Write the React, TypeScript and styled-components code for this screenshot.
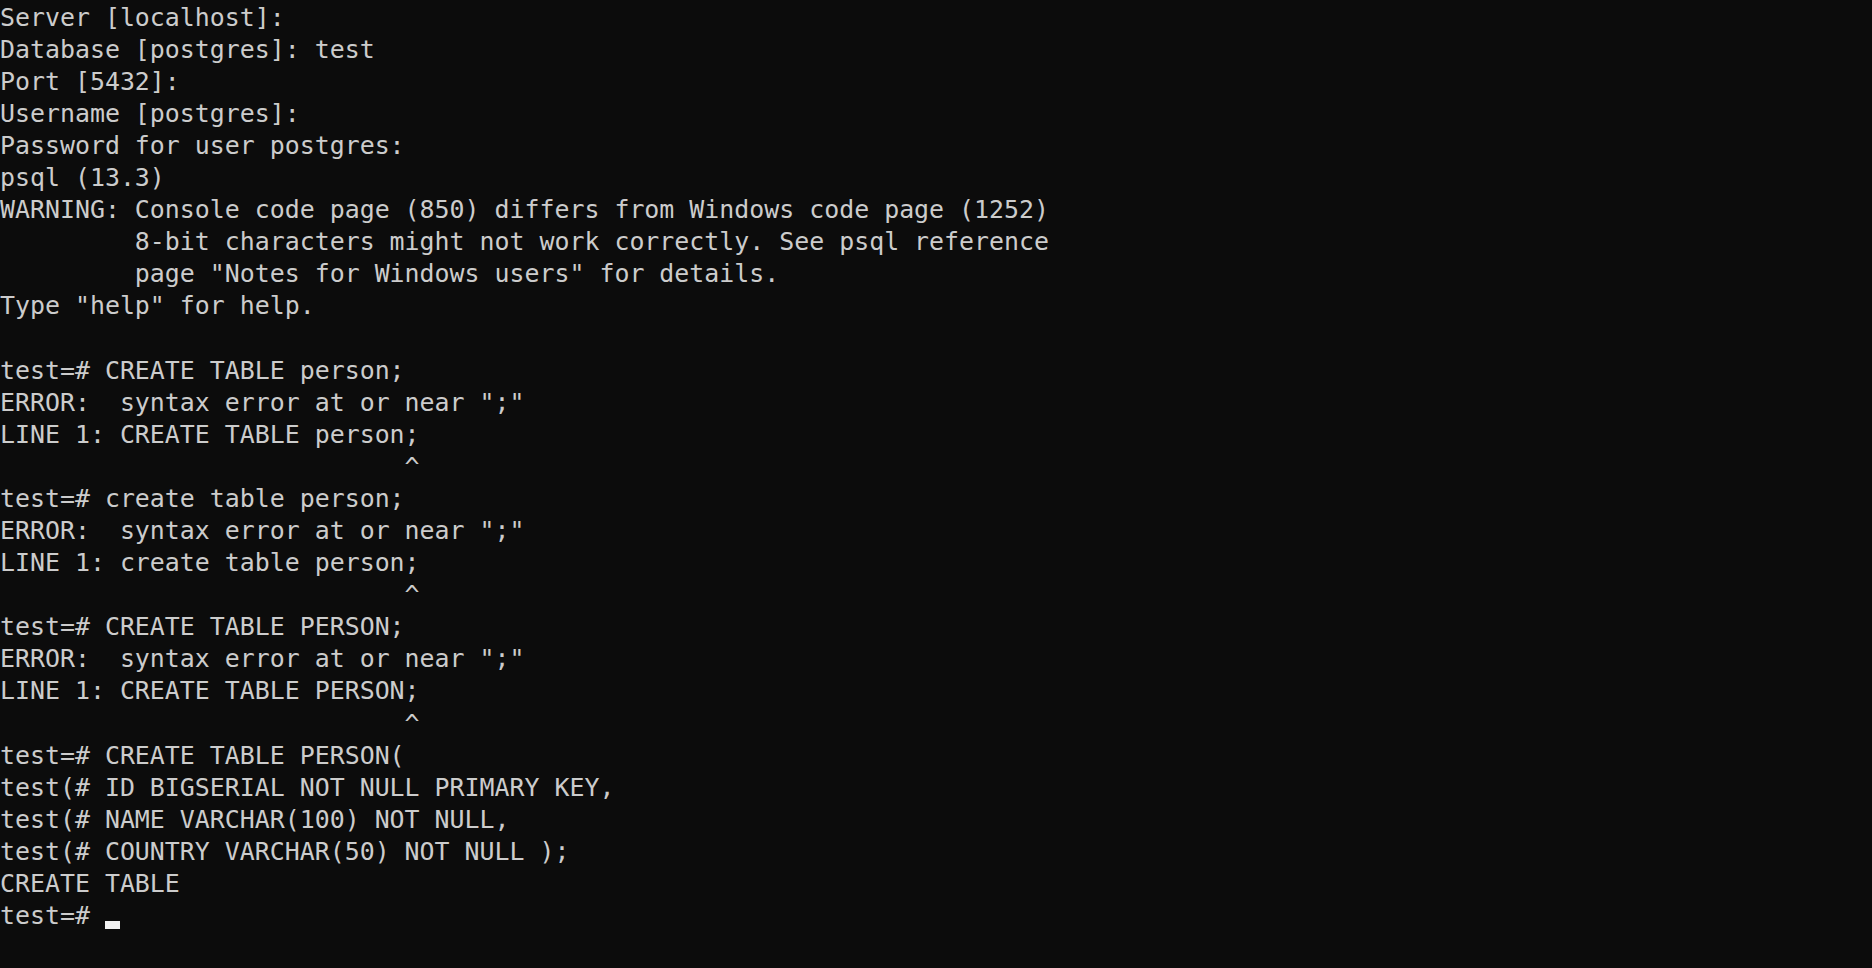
import React from "react";
import styled, { createGlobalStyle } from "styled-components";

const Global = createGlobalStyle`
  html, body { margin: 0; padding: 0; background: #0c0c0c; }
  body { width: 1872px; height: 968px; overflow: hidden; }
`;

const Console = styled.div`
  width: 1872px;
  height: 968px;
  box-sizing: border-box;
  background: #0c0c0c;
  color: #cccccc;
  font-family: "DejaVu Sans Mono", "Liberation Mono", monospace;
  font-size: 24.9px;
  line-height: 32.1px;
  padding: 1.5px 0 0;
  display: flex;
  flex-direction: column;
`;

const Line = styled.div`
  white-space: pre;
  height: 32.1px;
  display: flex;
  align-items: center;
`;

const Cursor = styled.span`
  display: inline-block;
  width: 15px;
  height: 8px;
  background: #f2f2f2;
  align-self: flex-end;
  margin-bottom: 3px;
`;

const lines = [
  "Server [localhost]:",
  "Database [postgres]: test",
  "Port [5432]:",
  "Username [postgres]:",
  "Password for user postgres:",
  "psql (13.3)",
  "WARNING: Console code page (850) differs from Windows code page (1252)",
  "         8-bit characters might not work correctly. See psql reference",
  '         page "Notes for Windows users" for details.',
  'Type "help" for help.',
  "",
  "test=# CREATE TABLE person;",
  'ERROR:  syntax error at or near ";"',
  "LINE 1: CREATE TABLE person;",
  "                           ^",
  "test=# create table person;",
  'ERROR:  syntax error at or near ";"',
  "LINE 1: create table person;",
  "                           ^",
  "test=# CREATE TABLE PERSON;",
  'ERROR:  syntax error at or near ";"',
  "LINE 1: CREATE TABLE PERSON;",
  "                           ^",
  "test=# CREATE TABLE PERSON(",
  "test(# ID BIGSERIAL NOT NULL PRIMARY KEY,",
  "test(# NAME VARCHAR(100) NOT NULL,",
  "test(# COUNTRY VARCHAR(50) NOT NULL );",
  "CREATE TABLE",
];

export default function App() {
  return (
    <>
      <Global />
      <Console>
        {lines.map((l, i) => (
          <Line key={i}>{l === "" ? " " : l}</Line>
        ))}
        <Line>
          {"test=# "}
          <Cursor />
        </Line>
      </Console>
    </>
  );
}
